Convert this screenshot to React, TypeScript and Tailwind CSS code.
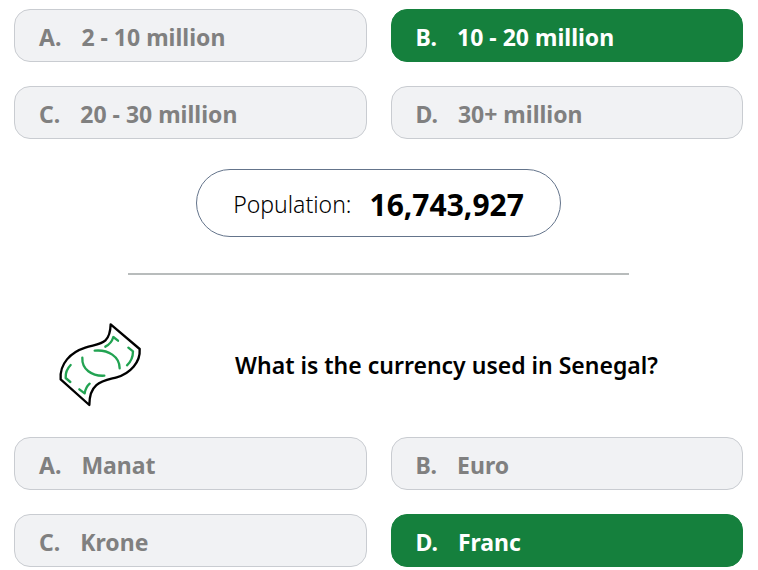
import clsx from 'clsx';

type Answer = {
  letter: string;
  text: string;
};

const populationAnswers: Answer[] = [
  { letter: 'A', text: '2 - 10 million' },
  { letter: 'B', text: '10 - 20 million' },
  { letter: 'C', text: '20 - 30 million' },
  { letter: 'D', text: '30+ million' },
];

const currencyAnswers: Answer[] = [
  { letter: 'A', text: 'Manat' },
  { letter: 'B', text: 'Euro' },
  { letter: 'C', text: 'Krone' },
  { letter: 'D', text: 'Franc' },
];

const AnswerGrid = ({ answers, correct }: { answers: Answer[]; correct: string }) => {
  return (
    <div className="grid grid-cols-2 gap-6">
      {answers.map((answer) => (
        <button
          key={answer.letter}
          type="button"
          className={clsx(
            'flex h-[53px] items-center gap-5 rounded-2xl border px-6 pt-[3px] text-[23px] font-bold whitespace-nowrap',
            answer.letter === correct
              ? 'border-[#15803d] bg-[#15803d] text-white'
              : 'border-[#c9ccd1] bg-[#f1f2f4] text-[#808080]'
          )}
        >
          <span>{answer.letter}.</span>
          <span>{answer.text}</span>
        </button>
      ))}
    </div>
  );
};

const BanknoteIcon = () => {
  return (
    <svg
      viewBox="0 0 300 300"
      fill="none"
      strokeWidth="7"
      strokeLinecap="round"
      strokeLinejoin="round"
      className="size-25 shrink-0"
      aria-hidden="true"
    >
      <path
        stroke="#000"
        d="M182 28 L269 102 C272 142 240 176 200 187 C160 198 118 200 118 270 L32 193 C28 146 62 112 106 98 C150 84 180 90 182 28 Z"
      />
      <g stroke="#22a352">
        <path d="M134 107 C175 103 209 125 209 160" />
        <path d="M97 128 C95 163 125 184 163 182" />
        <path d="M166 95 C178 89 186 80 190 66 L204 77" />
        <path d="M235 98 L249 109 C249 128 242 141 231 151" />
        <path d="M62 150 C50 162 46 174 47 189 L61 201" />
        <path d="M88 223 L104 235 C106 223 111 213 119 206" />
      </g>
    </svg>
  );
};

const App = () => {
  return (
    <main className="min-h-screen bg-white pt-[9px] pr-[15px] pb-1 pl-3.5 font-['Noto_Sans','Open_Sans',sans-serif] text-black">
      <AnswerGrid answers={populationAnswers} correct="B" />

      {/* Revealed answer */}
      <div className="mx-auto mt-[30px] flex h-17 w-fit items-center gap-[18px] rounded-full border border-[#64748b] px-9 pt-0.5 whitespace-nowrap">
        <span className="text-[23px] font-light">Population:</span>
        <span className="text-[30px] font-bold">16,743,927</span>
      </div>

      <hr className="mx-auto mt-9 w-11/16 border-t-2 border-[#b8bcbc]" />

      {/* Currency question */}
      <section>
        <div className="mt-10 mb-[22px] flex items-center pl-9">
          <BanknoteIcon />
          <h2 className="flex-1 text-center text-[23px] font-semibold">
            What is the currency used in Senegal?
          </h2>
        </div>
        <AnswerGrid answers={currencyAnswers} correct="D" />
      </section>
    </main>
  );
};

export default App;
